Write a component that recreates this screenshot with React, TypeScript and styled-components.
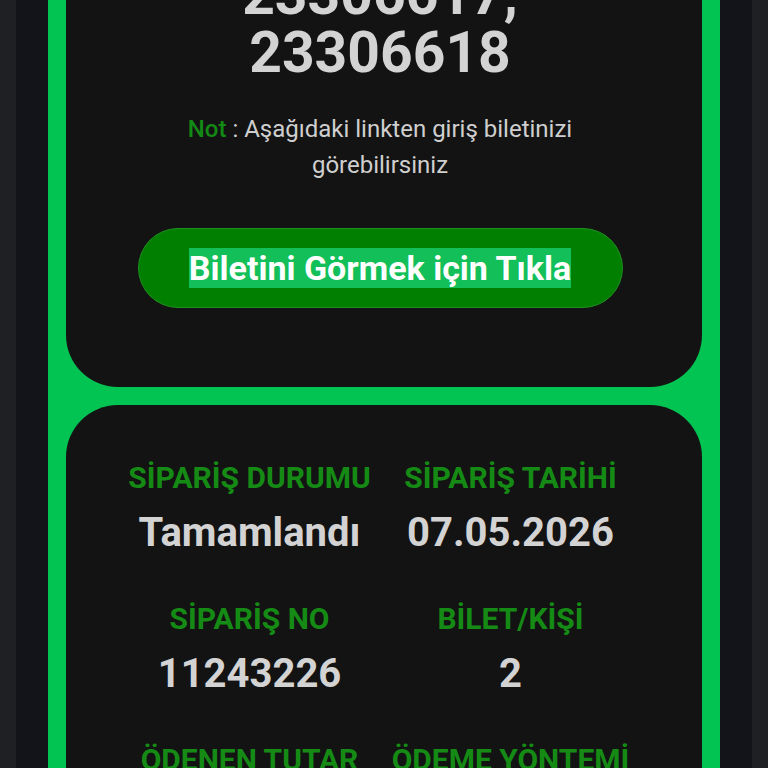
import styled, { createGlobalStyle } from 'styled-components';

const GlobalStyle = createGlobalStyle`
  html, body {
    margin: 0;
    padding: 0;
    background: #1f2024;
    overflow: hidden;
  }
  body {
    font-family: Roboto, "Noto Sans", Arial, sans-serif;
  }
`;

const Page = styled.div`
  display: flow-root;
  height: 768px;
  padding: 0 16px;
  background: #1f2024;
  overflow: hidden;
`;

const Shade = styled.div`
  display: flow-root;
  height: 100%;
  padding: 0 32px;
  background: #13141a;
`;

// scrolled view: the top of the first card sits above the viewport
const Frame = styled.div`
  height: calc(100% + 64px);
  margin-top: -64px;
  padding: 0 18px;
  background: #02c453;
  display: flex;
  flex-direction: column;
  gap: 18px;
  overflow: hidden;
`;

const Card = styled.section<{ top: number; bottom: number }>`
  background: #131313;
  border-radius: 52px;
  padding: ${p => p.top}px 48px ${p => p.bottom}px 40px;
  display: flex;
  flex-direction: column;
  align-items: center;
  flex-shrink: 0;
`;

const Numbers = styled.div`
  max-width: 480px;
  font-size: 57px;
  line-height: 58px;
  font-weight: 700;
  color: #d3d3d3;
  text-align: center;
`;

const Note = styled.p`
  margin: 29px 0 0;
  max-width: 440px;
  font-size: 24px;
  line-height: 36px;
  color: #cfcfcf;
  text-align: center;
`;

const NoteTag = styled.span`
  color: #138a13;
  font-weight: 500;
`;

const TicketButton = styled.button`
  margin-top: 45px;
  width: 485px;
  height: 80px;
  border-radius: 40px;
  border: 1px solid #1f8f1f;
  background: #017f01;
  display: flex;
  align-items: center;
  justify-content: center;
  cursor: pointer;
  font-family: inherit;
  padding: 0;
`;

const ButtonText = styled.span`
  background: #12bf58;
  color: #ffffff;
  font-size: 34px;
  font-weight: 700;
  line-height: normal;
`;

const InfoGrid = styled.div`
  width: 522px;
  display: grid;
  grid-template-columns: 1fr 1fr;
  row-gap: 45px;
`;

const InfoItem = styled.div`
  display: flex;
  flex-direction: column;
  align-items: center;
  gap: 14px;
`;

const Label = styled.div`
  font-size: 30px;
  line-height: 34px;
  font-weight: 700;
  color: #158b15;
  white-space: nowrap;
`;

const Value = styled.div`
  font-size: 40px;
  line-height: 48px;
  font-weight: 700;
  color: #d3d3d3;
  white-space: nowrap;
`;

const info = [
  { label: 'SİPARİŞ DURUMU', value: 'Tamamlandı' },
  { label: 'SİPARİŞ TARİHİ', value: '07.05.2026' },
  { label: 'SİPARİŞ NO', value: '11243226' },
  { label: 'BİLET/KİŞİ', value: '2' },
  { label: 'ÖDENEN TUTAR', value: '1.500,00 TL' },
  { label: 'ÖDEME YÖNTEMİ', value: 'Kredi Kartı' },
];

export default function App() {
  return (
    <>
      <GlobalStyle />
      <Page>
        <Shade>
          <Frame>
            <Card top={30} bottom={79}>
              <Numbers>23306617, 23306618</Numbers>
              <Note>
                <NoteTag>Not</NoteTag> : Aşağıdaki linkten giriş biletinizi görebilirsiniz
              </Note>
              <TicketButton>
                <ButtonText>Biletini Görmek için Tıkla</ButtonText>
              </TicketButton>
            </Card>
            <Card top={56} bottom={60}>
              <InfoGrid>
                {info.map(item => (
                  <InfoItem key={item.label}>
                    <Label>{item.label}</Label>
                    <Value>{item.value}</Value>
                  </InfoItem>
                ))}
              </InfoGrid>
            </Card>
          </Frame>
        </Shade>
      </Page>
    </>
  );
}
